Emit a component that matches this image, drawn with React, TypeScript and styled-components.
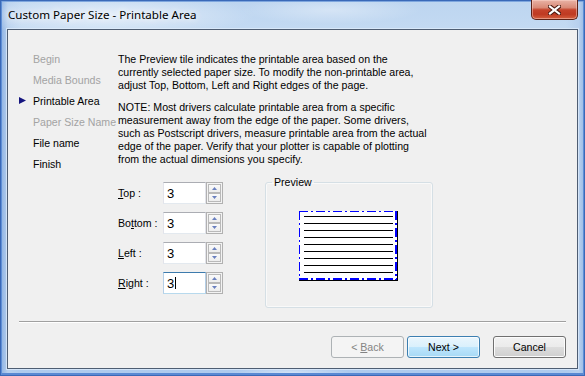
import React from "react";
import styled, { createGlobalStyle } from "styled-components";

const Global = createGlobalStyle`
  html, body { margin: 0; padding: 0; background: #fff; }
  body { width: 585px; height: 376px; overflow: hidden; }
  #root { width: 585px; height: 376px; }
`;

const UI_FONT = `"Liberation Sans", Arial, sans-serif`;

const Window = styled.div`
  box-sizing: border-box;
  width: 585px;
  height: 376px;
  display: flex;
  flex-direction: column;
  padding: 0 6px 6px 6px;
  border: 1px solid #3a69b8;
  background:
    radial-gradient(ellipse 150px 22px at 105px 14px, rgba(255,255,255,0.6), rgba(255,255,255,0) 100%),
    radial-gradient(ellipse 90px 14px at 330px 9px, rgba(255,255,255,0.35), rgba(255,255,255,0) 100%),
    radial-gradient(ellipse 60px 6px at 290px 372px, rgba(255,255,255,0.45), rgba(255,255,255,0) 100%),
    linear-gradient(90deg, #8fb3e3 0px, #b7d0ee 7px, rgba(183,208,238,0) 20px, rgba(183,208,238,0) 565px, #b7d0ee 578px, #8fb3e3 585px),
    linear-gradient(180deg, #bdd5f0 0%, #c6dcf3 12%, #b9d2ee 60%, #aecbee 100%);
  box-shadow:
    inset 1px 0 0 #5f8fd6,
    inset -1px 0 0 #5f8fd6,
    inset 0 -2px 0 #5a89d3,
    inset 0 1px 0 #7ea6de;
`;

const TitleBar = styled.div`
  height: 29px;
  margin-top: -1px;
  display: flex;
  align-items: flex-start;
  justify-content: space-between;
`;

const TitleText = styled.div`
  padding: 7px 0 0 1px;
  font-family: "Noto Sans", "Open Sans", sans-serif;
  font-size: 11.6px;
  line-height: 16px;
  color: #000;
  text-shadow: 0 0 6px rgba(255,255,255,0.9), 0 0 10px rgba(255,255,255,0.8);
`;

const CloseButton = styled.div`
  box-sizing: border-box;
  width: 47px;
  height: 20px;
  border: 1px solid #5c2217;
  border-top: none;
  border-radius: 0 0 5px 5px;
  display: flex;
  align-items: center;
  justify-content: center;
  background: linear-gradient(
    180deg,
    #e9b3a6 0%,
    #d98a77 40%,
    #c5432b 52%,
    #bf3a22 75%,
    #d4603f 100%
  );
  box-shadow: inset 0 0 0 1px rgba(255, 220, 210, 0.45);
`;

const Client = styled.div`
  box-sizing: border-box;
  flex: 1;
  display: flex;
  flex-direction: column;
  border: 1px solid #4e5d72;
  background: #f0f0f0;
  box-shadow: 0 0 0 1px rgba(225, 238, 252, 0.7);
  font-family: ${UI_FONT};
  font-size: 10.6px;
  color: #000;
`;

const Main = styled.div`
  height: 291px;
  display: flex;
  padding-top: 23px;
  box-sizing: border-box;
`;

const Nav = styled.div`
  width: 99px;
  margin-left: 11px;
  display: flex;
  flex-direction: column;
  gap: 8px;
`;

const NavItem = styled.div<{ $disabled?: boolean }>`
  display: grid;
  grid-template-columns: 14px auto;
  align-items: center;
  line-height: 13px;
  white-space: nowrap;
  color: ${(p) => (p.$disabled ? "#a3a3a3" : "#000")};
`;

const Content = styled.div`
  display: flex;
  flex-direction: column;
`;

const Para = styled.p`
  margin: 0 0 9px 0;
  line-height: 13px;
  white-space: nowrap;
`;

const FormRow = styled.div`
  display: flex;
  align-items: flex-start;
  margin-top: 1px;
`;

const Fields = styled.div`
  display: flex;
  flex-direction: column;
  gap: 8px;
  padding-top: 6px;
`;

const FieldRow = styled.div`
  display: flex;
  align-items: center;
  height: 22px;
`;

const FieldLabel = styled.label`
  width: 45px;
  white-space: nowrap;
  line-height: 13px;
`;

const Edit = styled.div<{ $focused?: boolean }>`
  box-sizing: border-box;
  width: 43px;
  height: 22px;
  padding-left: 3px;
  display: flex;
  align-items: center;
  background: #fff;
  font-family: ${UI_FONT};
  font-size: 13px;
  border: 1px solid ${(p) => (p.$focused ? "#b5cfe7" : "#e2e3ea")};
  border-top-color: ${(p) => (p.$focused ? "#3d7bad" : "#abadb3")};
  border-bottom-color: ${(p) => (p.$focused ? "#b7d9ed" : "#e3e9ef")};
`;

const Caret = styled.span`
  display: inline-block;
  width: 1px;
  height: 12px;
  margin-left: 1px;
  background: #000;
`;

const Spin = styled.div`
  box-sizing: border-box;
  width: 17px;
  height: 22px;
  border: 1px solid #b1b1b1;
  padding: 1px;
  display: flex;
  flex-direction: column;
  background: #f3f3f3;
`;

const SpinButton = styled.div`
  box-sizing: border-box;
  flex: 1;
  border: 1px solid #b9b9b9;
  background: linear-gradient(180deg, #fafafa 0%, #ededed 100%);
  display: flex;
  align-items: center;
  justify-content: center;
`;

const GroupBox = styled.fieldset`
  box-sizing: border-box;
  margin: 0 0 0 42px;
  width: 168px;
  height: 132px;
  padding: 0;
  border: 1px solid #d5dfe5;
  border-radius: 3px;
  box-shadow: inset 0 0 0 1px rgba(255,255,255,0.6);
  min-inline-size: 0;
`;

const Legend = styled.legend`
  margin-left: 6px;
  padding: 0 2px;
  line-height: 12px;
  font-size: 10.6px;
`;

const PreviewArea = styled.div`
  padding: 23px 0 0 33px;
`;

const Divider = styled.div`
  margin: 0 11px;
  border-top: 1px solid #a0a0a0;
  border-bottom: 1px solid #ffffff;
`;

const ButtonRow = styled.div`
  display: flex;
  justify-content: flex-end;
  padding: 13px 11px 0 11px;
`;

type Variant = "default" | "normal" | "disabled";

const Button = styled.button<{ $variant: Variant; $gap?: number }>`
  box-sizing: border-box;
  width: 73px;
  height: 22px;
  margin: 0 0 0 ${(p) => p.$gap ?? 0}px;
  padding: 0;
  border-radius: 3px;
  font-family: ${UI_FONT};
  font-size: 10.6px;
  color: ${(p) => (p.$variant === "disabled" ? "#838383" : "#000")};
  border: 1px solid
    ${(p) =>
      p.$variant === "default" ? "#3c7fb1" : p.$variant === "disabled" ? "#adb2b5" : "#707070"};
  background: ${(p) =>
    p.$variant === "default"
      ? "linear-gradient(180deg, #eaf6fd 0%, #d9f0fc 50%, #bee6fd 50%, #a7d9f5 100%)"
      : p.$variant === "disabled"
      ? "#f4f4f4"
      : "linear-gradient(180deg, #f2f2f2 0%, #ebebeb 50%, #dddddd 50%, #cfcfcf 100%)"};
  box-shadow: ${(p) =>
    p.$variant === "disabled"
      ? "none"
      : p.$variant === "default"
      ? "inset 0 0 0 1px rgba(255,255,255,0.7)"
      : "inset 0 0 0 1px #fcfcfc"};
`;

const CloseGlyph = () => (
  <svg width="13" height="10" viewBox="0 0 13 10">
    <path d="M2 1.5 L11 8.5 M11 1.5 L2 8.5" stroke="#4a1a10" strokeWidth="4.2" strokeLinecap="square" fill="none" />
    <path d="M2 1.5 L11 8.5 M11 1.5 L2 8.5" stroke="#ffffff" strokeWidth="2.2" strokeLinecap="square" fill="none" />
  </svg>
);

const NavArrow = () => (
  <svg width="8" height="8" viewBox="0 0 8 8">
    <polygon points="0,0 7,3.5 0,7" fill="#15157f" />
  </svg>
);

const SpinArrow = ({ up }: { up: boolean }) => (
  <svg width="5" height="3" viewBox="0 0 5 3">
    <polygon points={up ? "2.5,0 5,3 0,3" : "0,0 5,0 2.5,3"} fill="#6a80bf" />
  </svg>
);

const PaperPreview = () => {
  const lines = Array.from({ length: 9 }, (_, i) => 5.5 + 7 * i);
  return (
    <svg width="100" height="71" viewBox="0 0 100 71" style={{ display: "block" }}>
      <rect x="0" y="0" width="98" height="69" fill="#ffffff" />
      {lines.map((y) => (
        <line key={y} x1="5" y1={y} x2="94" y2={y} stroke="#000" strokeWidth="1" />
      ))}
      <line x1="0" y1="69.5" x2="99" y2="69.5" stroke="#000" />
      <line x1="98.5" y1="0" x2="98.5" y2="70" stroke="#000" />
      <line x1="0" y1="0.5" x2="98" y2="0.5" stroke="#0000ff" strokeDasharray="9 3 2 3" />
      <line x1="0.5" y1="0" x2="0.5" y2="69" stroke="#0000ff" strokeDasharray="9 3 2 3" />
      <line x1="97" y1="0" x2="97" y2="69" stroke="#0000ff" strokeWidth="2" strokeDasharray="9 3 2 3" />
      <line x1="0" y1="68" x2="98" y2="68" stroke="#0000ff" strokeWidth="2" strokeDasharray="9 3 2 3" />
    </svg>
  );
};

const navItems: { label: string; disabled?: boolean; current?: boolean }[] = [
  { label: "Begin", disabled: true },
  { label: "Media Bounds", disabled: true },
  { label: "Printable Area", current: true },
  { label: "Paper Size Name", disabled: true },
  { label: "File name" },
  { label: "Finish" },
];

const fields: { pre: string; key: string; post: string; focused?: boolean }[] = [
  { pre: "", key: "T", post: "op :" },
  { pre: "Bo", key: "t", post: "tom :" },
  { pre: "", key: "L", post: "eft :" },
  { pre: "", key: "R", post: "ight :", focused: true },
];

const para1 = [
  "The Preview tile indicates the printable area based on the",
  "currently selected paper size. To modify the non-printable area,",
  "adjust Top, Bottom, Left and Right edges of the page.",
];

const para2 = [
  "NOTE: Most drivers calculate printable area from a specific",
  "measurement away from the edge of the paper. Some drivers,",
  "such as Postscript drivers, measure printable area from the actual",
  "edge of the paper. Verify that your plotter is capable of plotting",
  "from the actual dimensions you specify.",
];

const Lines = ({ lines }: { lines: string[] }) => (
  <Para>
    {lines.map((l, i) => (
      <React.Fragment key={i}>
        {l}
        {i < lines.length - 1 && <br />}
      </React.Fragment>
    ))}
  </Para>
);

export default function App() {
  return (
    <>
      <Global />
      <Window>
        <TitleBar>
          <TitleText>Custom Paper Size - Printable Area</TitleText>
          <CloseButton>
            <CloseGlyph />
          </CloseButton>
        </TitleBar>
        <Client>
          <Main>
            <Nav>
              {navItems.map((n) => (
                <NavItem key={n.label} $disabled={n.disabled}>
                  <span>{n.current ? <NavArrow /> : null}</span>
                  <span>{n.label}</span>
                </NavItem>
              ))}
            </Nav>
            <Content>
              <Lines lines={para1} />
              <Lines lines={para2} />
              <FormRow>
                <Fields>
                  {fields.map((f) => (
                    <FieldRow key={f.post}>
                      <FieldLabel>
                        {f.pre}
                        <u>{f.key}</u>
                        {f.post}
                      </FieldLabel>
                      <Edit $focused={f.focused}>
                        3{f.focused && <Caret />}
                      </Edit>
                      <Spin>
                        <SpinButton>
                          <SpinArrow up />
                        </SpinButton>
                        <SpinButton>
                          <SpinArrow up={false} />
                        </SpinButton>
                      </Spin>
                    </FieldRow>
                  ))}
                </Fields>
                <GroupBox>
                  <Legend>Preview</Legend>
                  <PreviewArea>
                    <PaperPreview />
                  </PreviewArea>
                </GroupBox>
              </FormRow>
            </Content>
          </Main>
          <Divider />
          <ButtonRow>
            <Button $variant="disabled">
              &lt; <u>B</u>ack
            </Button>
            <Button $variant="default" $gap={3}>
              Next &gt;
            </Button>
            <Button $variant="normal" $gap={13}>
              Cancel
            </Button>
          </ButtonRow>
        </Client>
      </Window>
    </>
  );
}
